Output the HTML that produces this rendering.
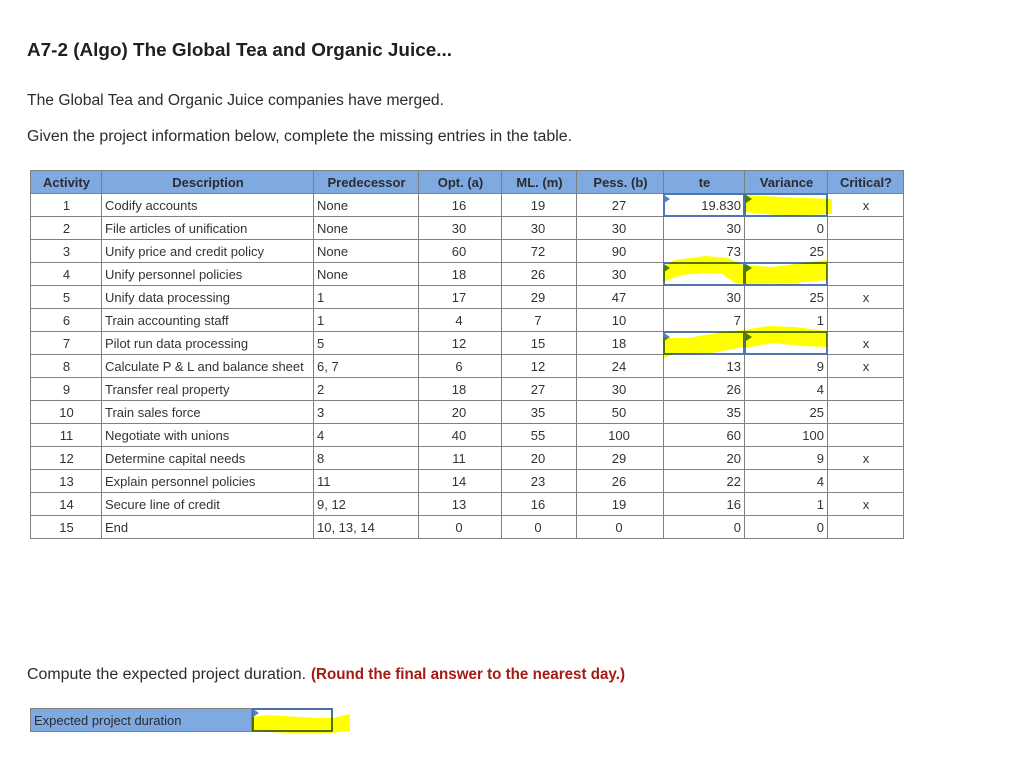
<!DOCTYPE html>
<html><head><meta charset="utf-8"><style>
html,body{margin:0;padding:0;background:#fff;width:1022px;height:759px;overflow:hidden}
body{position:relative;font-family:"Liberation Sans",Arial,sans-serif}
table{position:absolute;left:30px;top:170px;border-collapse:collapse;table-layout:fixed;width:873px;font-size:13px;color:#333}
td,th{border:1px solid #808080;height:21px;padding:1px 2px 0 3px;text-align:center;box-sizing:content-box;overflow:hidden;white-space:nowrap;line-height:14px}
th{background:#7ea9e1;font-weight:bold;color:#2b2b33}
td.l{text-align:left;padding-left:3px}
td.r{text-align:right;padding-right:3px}
td:nth-child(4),td:nth-child(5),td:nth-child(6){padding-left:2px;padding-right:4px}
svg{position:absolute;left:0;top:0}
.b{position:absolute;box-sizing:border-box;border:2px solid #4f76b3;background:#fff}
.t{position:absolute;width:0;height:0;border-left:6px solid #4f7fc4;border-top:4px solid transparent;border-bottom:4px solid transparent}
.lab{position:absolute;left:30px;top:708px;width:222px;height:24px;box-sizing:border-box;border:1px solid #808080;background:#7ea9e1;font-size:13px;color:#2b2b33;line-height:24px;padding-left:3px}
.y{mix-blend-mode:multiply}
</style></head><body>
<svg width="1022" height="759" style="font-family:'Liberation Sans',Arial,sans-serif">
<text x="27" y="56" font-size="18.5" font-weight="bold" fill="#1f1f24" textLength="425" lengthAdjust="spacingAndGlyphs">A7-2 (Algo) The Global Tea and Organic Juice...</text>
<text x="27" y="105" font-size="15.5" fill="#2c2c30" textLength="417" lengthAdjust="spacingAndGlyphs">The Global Tea and Organic Juice companies have merged.</text>
<text x="27" y="141" font-size="15.5" fill="#2c2c30" textLength="545" lengthAdjust="spacingAndGlyphs">Given the project information below, complete the missing entries in the table.</text>
<text x="27" y="679" font-size="15.5" fill="#2c2c30" textLength="279" lengthAdjust="spacingAndGlyphs">Compute the expected project duration.</text>
<text x="311" y="679" font-size="15.5" font-weight="bold" fill="#a51b14" textLength="314" lengthAdjust="spacingAndGlyphs">(Round the final answer to the nearest day.)</text>
</svg>
<table>
<colgroup><col style="width:71px"><col style="width:212px"><col style="width:105px"><col style="width:83px"><col style="width:75px"><col style="width:87px"><col style="width:81px"><col style="width:83px"><col style="width:76px"></colgroup>
<tr><th>Activity</th><th>Description</th><th>Predecessor</th><th>Opt. (a)</th><th>ML. (m)</th><th>Pess. (b)</th><th>te</th><th>Variance</th><th>Critical?</th></tr>
<tr><td>1</td><td class="l">Codify accounts</td><td class="l">None</td><td>16</td><td>19</td><td>27</td><td class="r">19.830</td><td class="r"></td><td>x</td></tr>
<tr><td>2</td><td class="l">File articles of unification</td><td class="l">None</td><td>30</td><td>30</td><td>30</td><td class="r">30</td><td class="r">0</td><td></td></tr>
<tr><td>3</td><td class="l">Unify price and credit policy</td><td class="l">None</td><td>60</td><td>72</td><td>90</td><td class="r">73</td><td class="r">25</td><td></td></tr>
<tr><td>4</td><td class="l">Unify personnel policies</td><td class="l">None</td><td>18</td><td>26</td><td>30</td><td class="r"></td><td class="r"></td><td></td></tr>
<tr><td>5</td><td class="l">Unify data processing</td><td class="l">1</td><td>17</td><td>29</td><td>47</td><td class="r">30</td><td class="r">25</td><td>x</td></tr>
<tr><td>6</td><td class="l">Train accounting staff</td><td class="l">1</td><td>4</td><td>7</td><td>10</td><td class="r">7</td><td class="r">1</td><td></td></tr>
<tr><td>7</td><td class="l">Pilot run data processing</td><td class="l">5</td><td>12</td><td>15</td><td>18</td><td class="r"></td><td class="r"></td><td>x</td></tr>
<tr><td>8</td><td class="l">Calculate P &amp; L and balance sheet</td><td class="l">6, 7</td><td>6</td><td>12</td><td>24</td><td class="r">13</td><td class="r">9</td><td>x</td></tr>
<tr><td>9</td><td class="l">Transfer real property</td><td class="l">2</td><td>18</td><td>27</td><td>30</td><td class="r">26</td><td class="r">4</td><td></td></tr>
<tr><td>10</td><td class="l">Train sales force</td><td class="l">3</td><td>20</td><td>35</td><td>50</td><td class="r">35</td><td class="r">25</td><td></td></tr>
<tr><td>11</td><td class="l">Negotiate with unions</td><td class="l">4</td><td>40</td><td>55</td><td>100</td><td class="r">60</td><td class="r">100</td><td></td></tr>
<tr><td>12</td><td class="l">Determine capital needs</td><td class="l">8</td><td>11</td><td>20</td><td>29</td><td class="r">20</td><td class="r">9</td><td>x</td></tr>
<tr><td>13</td><td class="l">Explain personnel policies</td><td class="l">11</td><td>14</td><td>23</td><td>26</td><td class="r">22</td><td class="r">4</td><td></td></tr>
<tr><td>14</td><td class="l">Secure line of credit</td><td class="l">9, 12</td><td>13</td><td>16</td><td>19</td><td class="r">16</td><td class="r">1</td><td>x</td></tr>
<tr><td>15</td><td class="l">End</td><td class="l">10, 13, 14</td><td>0</td><td>0</td><td>0</td><td class="r">0</td><td class="r">0</td><td></td></tr>
</table>

<div class="b" style="left:663px;top:193px;width:82px;height:24px;background:none"></div>
<div class="b" style="left:744px;top:193px;width:84px;height:24px"></div>
<div class="b" style="left:663px;top:262px;width:82px;height:24px"></div>
<div class="b" style="left:744px;top:262px;width:84px;height:24px"></div>
<div class="b" style="left:663px;top:331px;width:82px;height:24px"></div>
<div class="b" style="left:744px;top:331px;width:84px;height:24px"></div>
<div class="lab">Expected project duration</div>
<div class="b" style="left:252px;top:708px;width:81px;height:24px;border-color:#4f6f9f"></div>

<div class="t" style="left:664px;top:195px"></div>
<div class="t" style="left:746px;top:195px"></div>
<div class="t" style="left:664px;top:264px"></div>
<div class="t" style="left:746px;top:264px"></div>
<div class="t" style="left:664px;top:333px"></div>
<div class="t" style="left:746px;top:333px"></div>
<div class="t" style="left:253px;top:709px"></div>

<svg class="y" width="1022" height="759">
<g fill="#ffff00">
<path d="M745 195L783 197L832 199L832 214L787 216L745 212Z"/>
<path d="M663 267L675 260L705 256L728 258L743 265L746 283L735 283L722 274L705 273L682 275L663 282Z"/>
<path d="M744 265L772 267L802 263L827 260L827 280L795 283L745 284Z"/>
<path d="M663 338L688 338L722 332L744 330L744 347L712 353L675 354L663 358Z"/>
<path d="M744 330L768 326L795 327L827 331L827 347L802 346L772 343L745 348Z"/>
<path d="M252 717L267 715L317 718L333 718L350 714L350 731L330 733L287 733L252 731Z"/>
</g>
</svg>
</body></html>
